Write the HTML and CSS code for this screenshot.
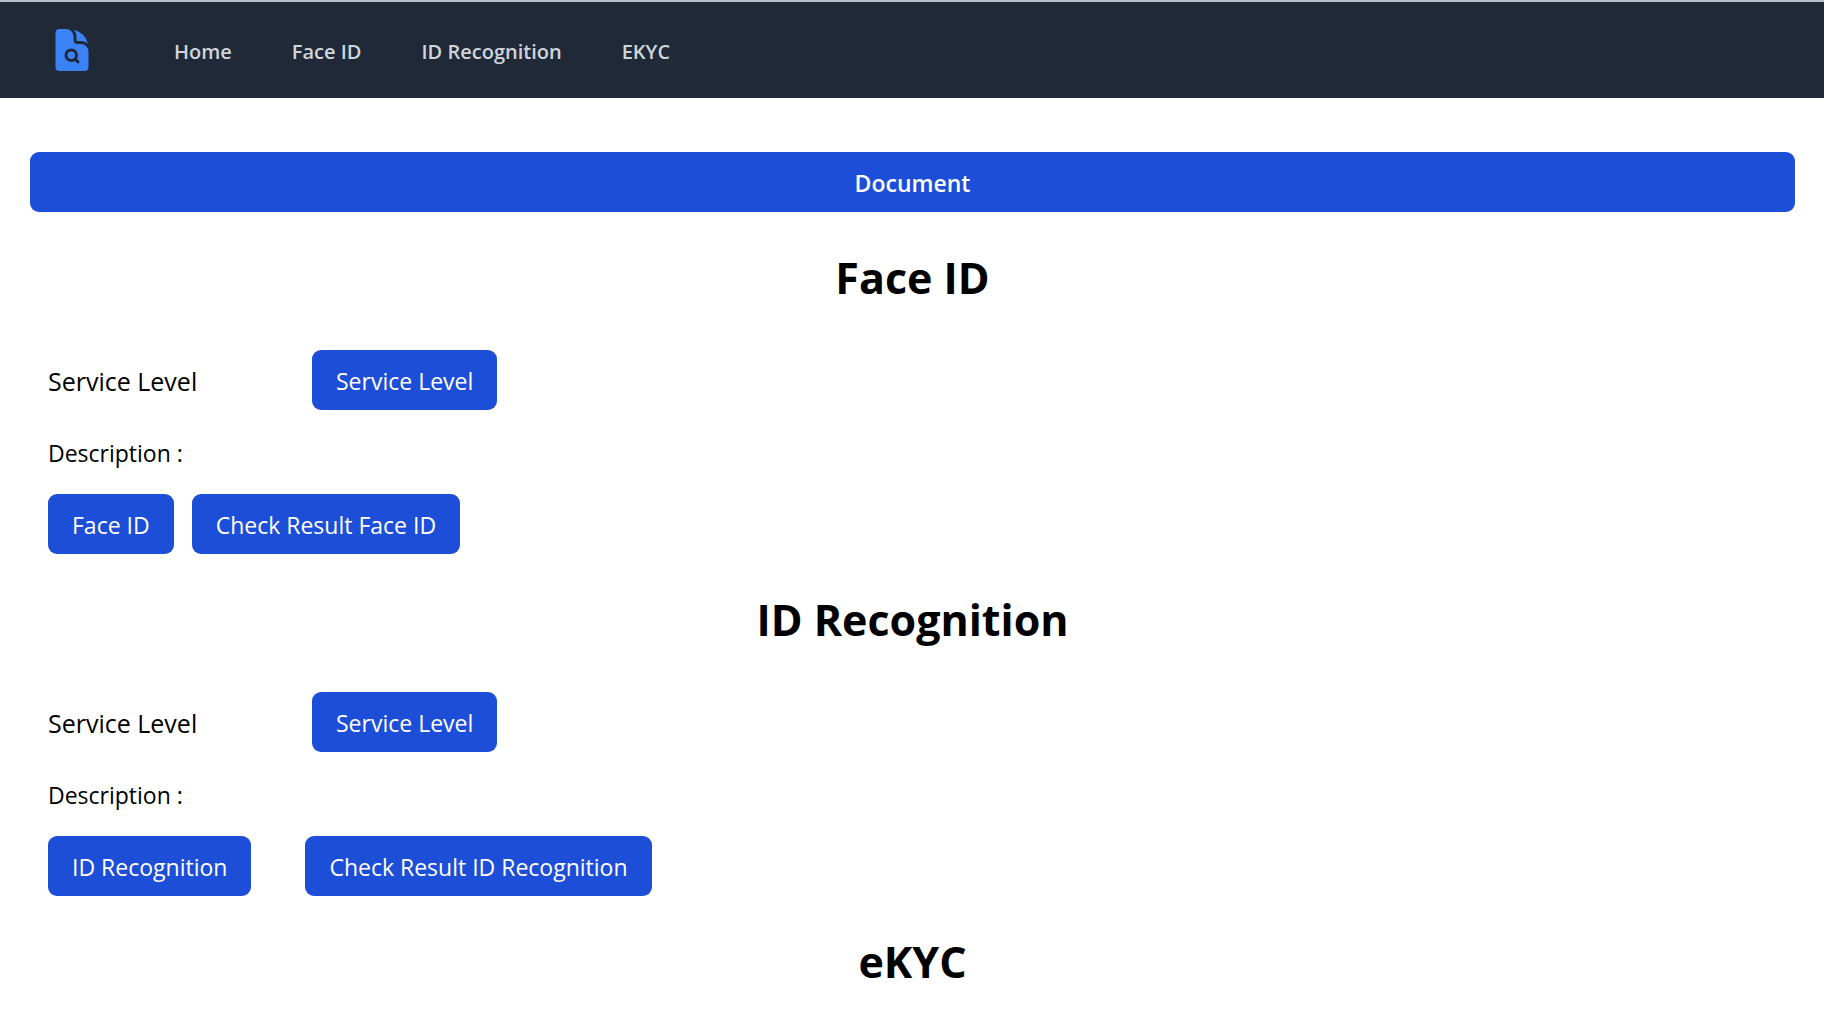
FILE: index.html
```html
<!DOCTYPE html>
<html lang="en">
<head>
<meta charset="utf-8">
<meta name="viewport" content="width=device-width, initial-scale=1">
<title>Document</title>
<link rel="stylesheet" href="styles.css">
</head>
<body>
<nav class="navbar" aria-label="Main">
  <a class="logo" href="#" aria-label="Start">
    <svg viewBox="0 0 24 24" fill="currentColor" aria-hidden="true">
      <path d="M11.625 16.5a1.875 1.875 0 1 0 0-3.75 1.875 1.875 0 0 0 0 3.75z"/>
      <path fill-rule="evenodd" clip-rule="evenodd" d="M5.625 1.5H9a3.75 3.75 0 0 1 3.75 3.75v1.875c0 1.036.84 1.875 1.875 1.875H16.5a3.75 3.75 0 0 1 3.75 3.75v7.875c0 1.035-.84 1.875-1.875 1.875H5.625a1.875 1.875 0 0 1-1.875-1.875V3.375c0-1.036.84-1.875 1.875-1.875zm6 16.5c.66 0 1.277-.19 1.797-.518l1.048 1.048a.75.75 0 0 0 1.06-1.06l-1.047-1.048A3.375 3.375 0 1 0 11.625 18z"/>
      <path d="M14.25 5.25a5.23 5.23 0 0 0-1.279-3.434 9.768 9.768 0 0 1 6.963 6.963A5.23 5.23 0 0 0 16.5 7.5h-1.875a.375.375 0 0 1-.375-.375V5.25z"/>
    </svg>
  </a>
  <div class="links">
    <a href="#">Home</a>
    <a href="#face-id">Face ID</a>
    <a href="#id-recognition">ID Recognition</a>
    <a href="#ekyc">EKYC</a>
  </div>
</nav>
<main>
  <button class="btn btn-wide" type="button">Document</button>
  <section id="face-id">
    <h2>Face ID</h2>
    <div class="content">
      <div class="row">
        <span class="level">Service Level</span>
        <button class="btn" type="button">Service Level</button>
      </div>
      <p class="description">Description :</p>
      <div class="row actions">
        <button class="btn" type="button">Face ID</button>
        <button class="btn" type="button">Check Result Face ID</button>
      </div>
    </div>
  </section>
  <section id="id-recognition">
    <h2>ID Recognition</h2>
    <div class="content">
      <div class="row">
        <span class="level">Service Level</span>
        <button class="btn" type="button">Service Level</button>
      </div>
      <p class="description">Description :</p>
      <div class="row actions actions-spaced">
        <button class="btn" type="button">ID Recognition</button>
        <button class="btn" type="button">Check Result ID Recognition</button>
      </div>
    </div>
  </section>
  <section id="ekyc">
    <h2>eKYC</h2>
  </section>
</main>
</body>
</html>
```
FILE: styles.css
```css
* {
  box-sizing: border-box;
}

body {
  margin: 0;
  background: #fff;
  color: #000;
  font-family: "Segoe UI", "Open Sans", "Noto Sans", sans-serif;
  font-size: 23px;
  line-height: 36px;
}

.navbar {
  display: flex;
  align-items: center;
  gap: 78px;
  height: 98px;
  padding: 0 48px;
  border-top: 2px solid #b9bcc4;
  background: #1f2937;
}

.logo {
  color: #3b82f6;
}

.logo svg {
  display: block;
  width: 48px;
  height: 48px;
}

.links {
  display: flex;
  gap: 60px;
  padding-top: 3px;
}

.links a {
  color: #d1d5db;
  font-size: 20px;
  font-weight: 600;
  line-height: 30px;
  text-decoration: none;
}

main {
  padding: 54px 29px 0 30px;
}

.btn {
  padding: 13px 24px 11px;
  border: 0;
  border-radius: 9px;
  background: #1d4ed8;
  color: #fff;
  font: inherit;
  white-space: nowrap;
  cursor: pointer;
}

.btn-wide {
  display: block;
  width: 100%;
  font-weight: 600;
}

h2 {
  margin: 36px 0 0;
  font-size: 43px;
  font-weight: 700;
  line-height: 60px;
  text-align: center;
}

.content {
  padding: 42px 18px 0;
}

.row {
  display: flex;
  align-items: center;
}

.level {
  width: 264px;
  padding-top: 2px;
  font-size: 25px;
}

.description {
  margin: 25px 0 23px;
}

.actions {
  gap: 18px;
}

.actions-spaced {
  gap: 54px;
}
```
